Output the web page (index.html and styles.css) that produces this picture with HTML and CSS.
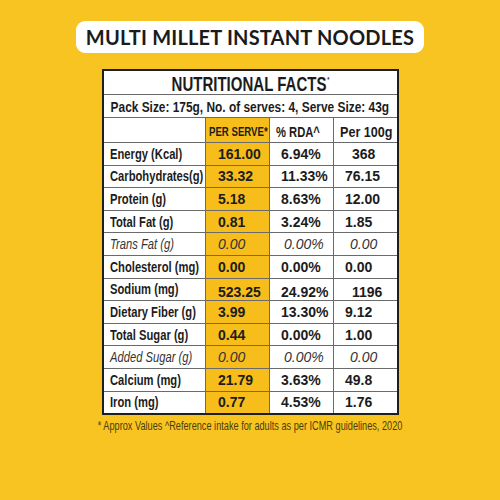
FILE: index.html
```html
<!DOCTYPE html>
<html lang="en">
<head>
    <meta charset="UTF-8">
    <meta name="viewport" content="width=device-width, initial-scale=1.0">
    <title>Multi Millet Instant Noodles</title>
    <link rel="stylesheet" href="styles.css">
</head>
<body>
    <div class="page">
        <h1 class="product-title">MULTI MILLET INSTANT NOODLES</h1>

        <table class="facts">
            <colgroup>
                <col class="c-name">
                <col class="c-serve">
                <col class="c-rda">
                <col class="c-100">
            </colgroup>
            <tr class="facts-title">
                <td colspan="4"><span class="nar">NUTRITIONAL FACTS<sup>*</sup></span></td>
            </tr>
            <tr class="pack-info">
                <td colspan="4"><span class="nar">Pack Size: 175g, No. of serves: 4, Serve Size: 43g</span></td>
            </tr>
            <tr class="col-head">
                <td></td>
                <td class="serve"><span class="nar">PER SERVE*</span></td>
                <td><span class="nar">% RDA^</span></td>
                <td class="per"><span class="nar">Per 100g</span></td>
            </tr>
            <tr>
                <td class="label"><span class="nar">Energy (Kcal)</span></td>
                <td class="serve">161.00</td>
                <td>6.94%</td>
                <td class="wide">368</td>
            </tr>
            <tr>
                <td class="label"><span class="nar">Carbohydrates(g)</span></td>
                <td class="serve">33.32</td>
                <td>11.33%</td>
                <td>76.15</td>
            </tr>
            <tr>
                <td class="label"><span class="nar">Protein (g)</span></td>
                <td class="serve">5.18</td>
                <td>8.63%</td>
                <td>12.00</td>
            </tr>
            <tr>
                <td class="label"><span class="nar">Total Fat (g)</span></td>
                <td class="serve">0.81</td>
                <td>3.24%</td>
                <td>1.85</td>
            </tr>
            <tr class="sub">
                <td class="label"><span class="nar">Trans Fat (g)</span></td>
                <td class="serve">0.00</td>
                <td class="pct">0.00%</td>
                <td class="zero">0.00</td>
            </tr>
            <tr>
                <td class="label"><span class="nar">Cholesterol (mg)</span></td>
                <td class="serve">0.00</td>
                <td>0.00%</td>
                <td>0.00</td>
            </tr>
            <tr class="low">
                <td class="label"><span class="nar">Sodium (mg)</span></td>
                <td class="serve">523.25</td>
                <td>24.92%</td>
                <td class="wide">1196</td>
            </tr>
            <tr>
                <td class="label"><span class="nar">Dietary Fiber (g)</span></td>
                <td class="serve">3.99</td>
                <td>13.30%</td>
                <td>9.12</td>
            </tr>
            <tr>
                <td class="label"><span class="nar">Total Sugar (g)</span></td>
                <td class="serve">0.44</td>
                <td>0.00%</td>
                <td>1.00</td>
            </tr>
            <tr class="sub">
                <td class="label"><span class="nar">Added Sugar (g)</span></td>
                <td class="serve">0.00</td>
                <td class="pct">0.00%</td>
                <td class="zero">0.00</td>
            </tr>
            <tr>
                <td class="label"><span class="nar">Calcium (mg)</span></td>
                <td class="serve">21.79</td>
                <td>3.63%</td>
                <td>49.8</td>
            </tr>
            <tr>
                <td class="label"><span class="nar">Iron (mg)</span></td>
                <td class="serve">0.77</td>
                <td>4.53%</td>
                <td>1.76</td>
            </tr>
        </table>

        <p class="footnote"><span class="nar">* Approx Values ^Reference intake for adults as per ICMR guidelines, 2020</span></p>
    </div>
</body>
</html>
```

FILE: styles.css
```css
* {
    margin: 0;
    padding: 0;
    box-sizing: border-box;
}

body {
    background-color: #f8c421;
    font-family: "Liberation Sans", Arial, sans-serif;
    color: #1c1c1c;
}

.page {
    width: 500px;
    height: 500px;
    display: flex;
    flex-direction: column;
    align-items: center;
    padding-top: 21px;
}

/* Title pill */
.product-title {
    width: 348px;
    height: 32px;
    background: #fff;
    border-radius: 9px;
    font-family: Lato, sans-serif;
    font-size: 20px;
    font-weight: 700;
    line-height: 32px;
    text-align: center;
    color: #1b1b1b;
    letter-spacing: 0.2px;
}

/* condensed lettering, the print uses a narrow face */
.nar {
    display: inline-block;
    white-space: nowrap;
    transform-origin: left center;
}

/* Nutrition table */
.facts {
    margin-top: 16px;
    width: 295px;
    border-collapse: collapse;
    border: 2px solid #1e1e1e;
    background: #fff;
    table-layout: fixed;
}

.c-name { width: 103px; }
.c-serve { width: 64px; }
.c-rda { width: 64px; }
.c-100 { width: 64px; }

.facts td {
    border: 1px solid #6a6a6a;
    height: 22.6px;
    padding: 0 0 0 11px;
    font-size: 14px;
    font-weight: 700;
    line-height: 16px;
    white-space: nowrap;
    overflow: visible;
    vertical-align: middle;
}

.facts td.label {
    padding-left: 6px;
}

.facts td.label .nar {
    transform: scaleX(0.8);
}

.facts td.serve {
    background: #f6bd1b;
    padding-left: 12px;
}

.facts td.wide {
    padding-left: 18px;
}

.facts td.zero {
    padding-left: 16px;
}

.facts td.pct {
    padding-left: 14px;
}

.facts-title td {
    height: 24px;
    text-align: center;
    padding: 3px 0 0;
    font-size: 19.5px;
    line-height: 20px;
}

.facts-title .nar {
    transform-origin: center;
    transform: scaleX(0.77);
}

.facts-title sup {
    font-size: 7px;
    line-height: 0;
    vertical-align: 9px;
    margin-left: 1px;
}

.pack-info td {
    height: 23px;
    text-align: center;
    padding: 1px 0 0;
}

.pack-info .nar {
    margin: 0 -50px;
    transform-origin: center;
    transform: scaleX(0.85);
}

.col-head td {
    height: 25px;
    vertical-align: bottom;
    padding-bottom: 2px;
    padding-left: 6px;
}

.col-head td.serve {
    padding-left: 3px;
    padding-bottom: 2px;
    font-size: 12.5px;
}

.col-head td .nar {
    transform: scaleX(0.8);
}

.col-head td.serve .nar {
    transform: scaleX(0.77);
}

.col-head td.per .nar {
    transform: scaleX(0.9);
}

.sub td {
    font-style: italic;
    font-weight: 400;
    color: #333;
}

.low td:not(.label) {
    padding-top: 5px;
}

/* Footnote */
.footnote {
    margin-top: 3px;
    text-align: center;
    font-size: 13.5px;
    color: #4a3d0c;
}

.footnote .nar {
    margin: 0 -80px;
    transform-origin: center;
    transform: scaleX(0.68);
}
```
